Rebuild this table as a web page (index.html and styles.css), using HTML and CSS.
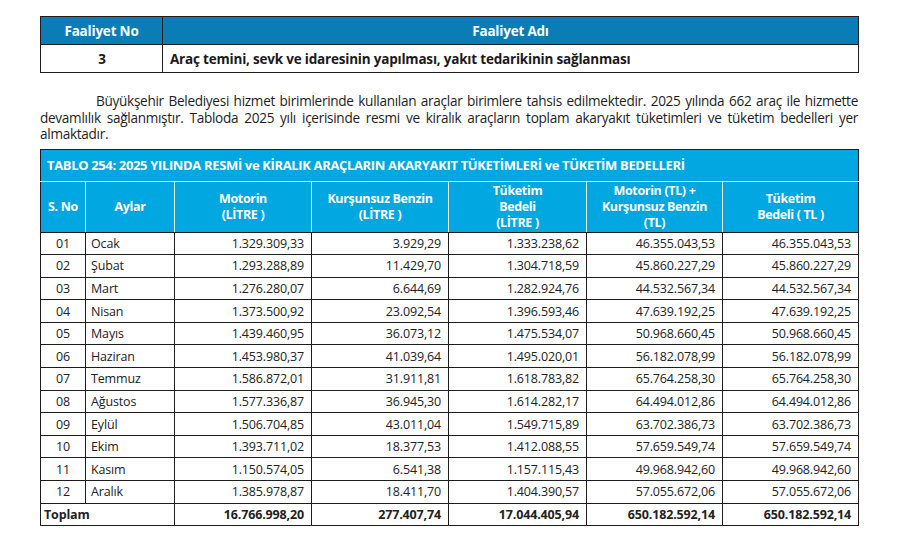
FILE: index.html
```html
<!DOCTYPE html>
<html lang="tr">
<head>
<meta charset="utf-8">
<link rel="stylesheet" href="styles.css">
</head>
<body>
<div class="page">
  <table class="act">
    <colgroup><col class="c-no"><col class="c-name"></colgroup>
    <thead>
      <tr><th>Faaliyet No</th><th>Faaliyet Adı</th></tr>
    </thead>
    <tbody>
      <tr><td class="center">3</td><td>Araç temini, sevk ve idaresinin yapılması, yakıt tedarikinin sağlanması</td></tr>
    </tbody>
  </table>

  <p class="intro">Büyükşehir Belediyesi hizmet birimlerinde kullanılan araçlar birimlere tahsis edilmektedir. 2025 yılında 662 araç ile hizmette devamlılık sağlanmıştır. Tabloda 2025 yılı içerisinde resmi ve kiralık araçların toplam akaryakıt tüketimleri ve tüketim bedelleri yer almaktadır.</p>

  <table class="fuel">
    <colgroup>
      <col class="w-no"><col class="w-month"><col class="w-a"><col class="w-b"><col class="w-c"><col class="w-d"><col class="w-e">
    </colgroup>
    <thead>
      <tr class="title"><th colspan="7">TABLO 254: 2025 YILINDA RESMİ ve KİRALIK ARAÇLARIN AKARYAKIT TÜKETİMLERİ ve TÜKETİM BEDELLERİ</th></tr>
      <tr class="heads">
        <th>S. No</th>
        <th>Aylar</th>
        <th>Motorin<br>(LİTRE )</th>
        <th>Kurşunsuz Benzin<br>(LİTRE )</th>
        <th>Tüketim<br>Bedeli<br>(LİTRE )</th>
        <th>Motorin (TL) +<br>Kurşunsuz Benzin<br>(TL)</th>
        <th>Tüketim<br>Bedeli ( TL )</th>
      </tr>
    </thead>
    <tbody>
      <tr><td class="center">01</td><td>Ocak</td><td class="num">1.329.309,33</td><td class="num">3.929,29</td><td class="num">1.333.238,62</td><td class="num">46.355.043,53</td><td class="num">46.355.043,53</td></tr>
      <tr><td class="center">02</td><td>Şubat</td><td class="num">1.293.288,89</td><td class="num">11.429,70</td><td class="num">1.304.718,59</td><td class="num">45.860.227,29</td><td class="num">45.860.227,29</td></tr>
      <tr><td class="center">03</td><td>Mart</td><td class="num">1.276.280,07</td><td class="num">6.644,69</td><td class="num">1.282.924,76</td><td class="num">44.532.567,34</td><td class="num">44.532.567,34</td></tr>
      <tr><td class="center">04</td><td>Nisan</td><td class="num">1.373.500,92</td><td class="num">23.092,54</td><td class="num">1.396.593,46</td><td class="num">47.639.192,25</td><td class="num">47.639.192,25</td></tr>
      <tr><td class="center">05</td><td>Mayıs</td><td class="num">1.439.460,95</td><td class="num">36.073,12</td><td class="num">1.475.534,07</td><td class="num">50.968.660,45</td><td class="num">50.968.660,45</td></tr>
      <tr><td class="center">06</td><td>Haziran</td><td class="num">1.453.980,37</td><td class="num">41.039,64</td><td class="num">1.495.020,01</td><td class="num">56.182.078,99</td><td class="num">56.182.078,99</td></tr>
      <tr><td class="center">07</td><td>Temmuz</td><td class="num">1.586.872,01</td><td class="num">31.911,81</td><td class="num">1.618.783,82</td><td class="num">65.764.258,30</td><td class="num">65.764.258,30</td></tr>
      <tr><td class="center">08</td><td>Ağustos</td><td class="num">1.577.336,87</td><td class="num">36.945,30</td><td class="num">1.614.282,17</td><td class="num">64.494.012,86</td><td class="num">64.494.012,86</td></tr>
      <tr><td class="center">09</td><td>Eylül</td><td class="num">1.506.704,85</td><td class="num">43.011,04</td><td class="num">1.549.715,89</td><td class="num">63.702.386,73</td><td class="num">63.702.386,73</td></tr>
      <tr><td class="center">10</td><td>Ekim</td><td class="num">1.393.711,02</td><td class="num">18.377,53</td><td class="num">1.412.088,55</td><td class="num">57.659.549,74</td><td class="num">57.659.549,74</td></tr>
      <tr><td class="center">11</td><td>Kasım</td><td class="num">1.150.574,05</td><td class="num">6.541,38</td><td class="num">1.157.115,43</td><td class="num">49.968.942,60</td><td class="num">49.968.942,60</td></tr>
      <tr><td class="center">12</td><td>Aralık</td><td class="num">1.385.978,87</td><td class="num">18.411,70</td><td class="num">1.404.390,57</td><td class="num">57.055.672,06</td><td class="num">57.055.672,06</td></tr>
      <tr class="total"><td colspan="2">Toplam</td><td class="num">16.766.998,20</td><td class="num">277.407,74</td><td class="num">17.044.405,94</td><td class="num">650.182.592,14</td><td class="num">650.182.592,14</td></tr>
    </tbody>
  </table>
</div>
</body>
</html>
```

FILE: styles.css
```css
* { box-sizing: border-box; }
html, body { margin: 0; padding: 0; background: #fff; }
body {
  font-family: "Open Sans", "Liberation Sans", sans-serif;
  color: #1a1a1a;
}
.page {
  width: 897px;
  padding: 16px 39px 0 40px;
}
table {
  border-collapse: collapse;
  table-layout: fixed;
  width: 818px;
}

/* activity table */
.act .c-no { width: 122px; }
.act .c-name { width: 696px; }
.act th {
  background: #0b7db6;
  color: #fff;
  font-weight: 700;
  font-size: 13.5px;
  height: 28px;
  padding: 0 6px;
  text-align: center;
  border: 1px solid #1d1d1d;
  letter-spacing: -0.2px;
}
.act td {
  height: 28px;
  font-size: 13.5px;
  font-weight: 700;
  border: 1px solid #1d1d1d;
  padding: 0 6px 0 7px;
  letter-spacing: -0.2px;
}
.center { text-align: center; }

/* paragraph */
.intro {
  margin: 20px 0 6px;
  font-size: 13.6px;
  line-height: 16.5px;
  text-indent: 56px;
  text-align: justify;
  color: #1e1e1e;
  letter-spacing: -0.3px;
  word-spacing: -0.8px;
}

/* fuel table */
.fuel .w-no { width: 45px; }
.fuel .w-month { width: 89px; }
.fuel .w-a { width: 137px; }
.fuel .w-b { width: 137px; }
.fuel .w-c { width: 138px; }
.fuel .w-d { width: 136px; }
.fuel .w-e { width: 136px; }

.fuel thead th {
  background: #00a7e1;
  color: #fff;
  font-weight: 700;
}
.fuel .title th {
  height: 32px;
  text-align: left;
  font-size: 13px;
  padding: 0 6px;
  letter-spacing: -0.35px;
  border: 1px solid #1d1d1d;
  border-bottom: 1px solid #d9f2fb;
}
.fuel .heads th {
  height: 51px;
  font-size: 12.5px;
  line-height: 16px;
  text-align: center;
  padding: 0 4px;
  letter-spacing: -0.35px;
  border-left: 1px solid #e6f6fc;
  border-right: 1px solid #e6f6fc;
  border-bottom: 1px solid #1d1d1d;
}
.fuel .heads th:first-child { border-left: 1px solid #1d1d1d; }
.fuel .heads th:last-child { border-right: 1px solid #1d1d1d; }

.fuel td {
  height: 22.6px;
  font-size: 12.5px;
  border: 1px solid #1d1d1d;
  padding: 0 5px;
  color: #222;
  letter-spacing: -0.15px;
}
.fuel td.num { text-align: right; padding-right: 7px; }
.fuel .total td { font-weight: 700; font-size: 12.5px; }
.fuel .total td:first-child { padding-left: 3px; }
```
